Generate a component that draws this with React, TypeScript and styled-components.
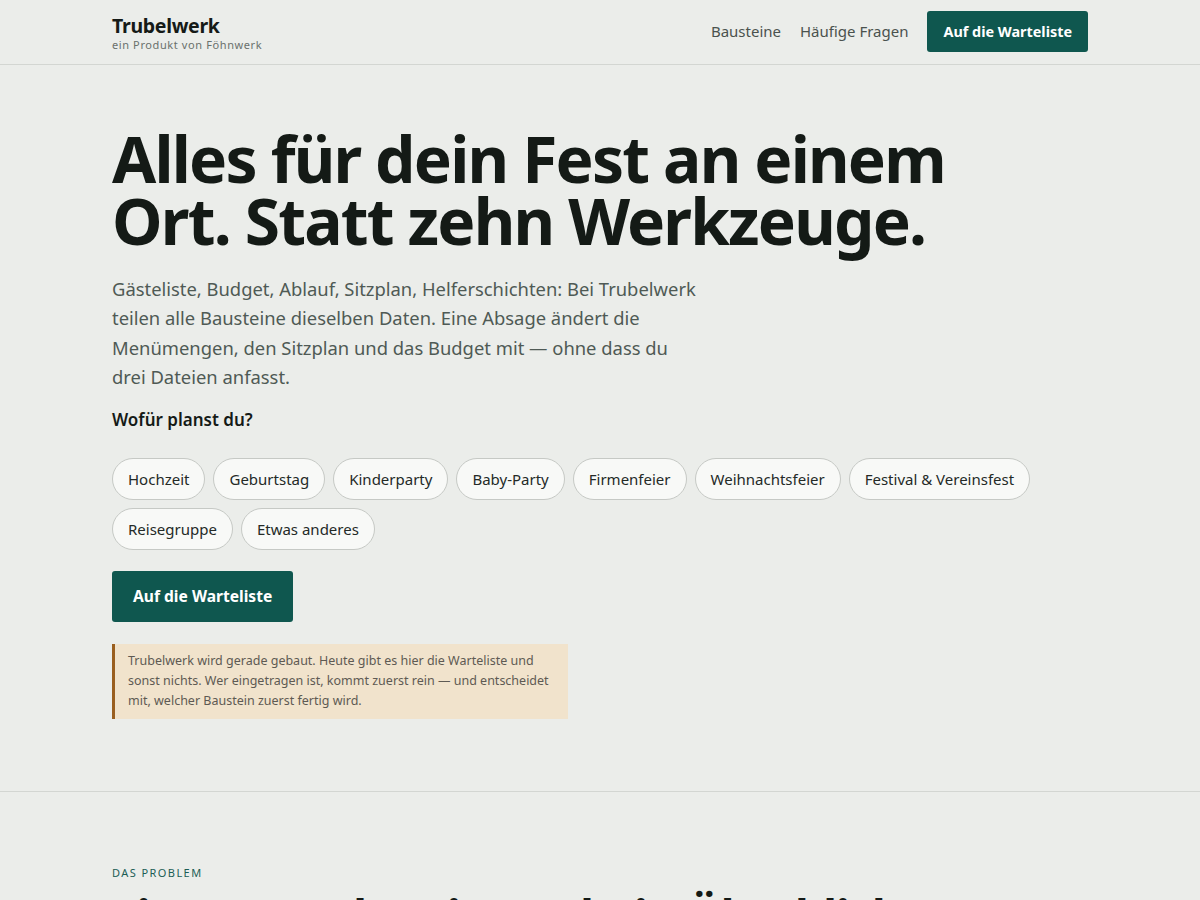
import styled, { createGlobalStyle } from "styled-components";

const GlobalStyle = createGlobalStyle`
  html, body {
    margin: 0;
    padding: 0;
    background: #ebedea;
  }
  body {
    font-family: "Noto Sans", "Open Sans", sans-serif;
    color: #151a17;
  }
  * {
    box-sizing: border-box;
  }
`;

const Header = styled.header`
  border-bottom: 1px solid #d3d6d2;
  background: #ebedea;
`;

const Container = styled.div`
  width: 976px;
  margin: 0 auto;
`;

const HeaderInner = styled(Container)`
  height: 64px;
  padding-bottom: 2px;
  display: flex;
  align-items: center;
  justify-content: space-between;
`;

const Brand = styled.div`
  display: flex;
  flex-direction: column;
  padding-top: 3px;
`;

const BrandName = styled.span`
  font-size: 19.5px;
  font-weight: 700;
  line-height: 24px;
  letter-spacing: -0.015em;
  color: #151a17;
`;

const BrandSub = styled.span`
  font-size: 11px;
  line-height: 14px;
  letter-spacing: 0.055em;
  color: #6a716d;
`;

const Nav = styled.nav`
  display: flex;
  align-items: center;
  gap: 19px;
`;

const NavLink = styled.a`
  font-size: 15px;
  color: #4a524e;
  text-decoration: none;
`;

const Button = styled.a<{ $large?: boolean }>`
  display: inline-flex;
  align-items: center;
  justify-content: center;
  background: #0f574f;
  color: #ffffff;
  font-weight: 700;
  text-decoration: none;
  border-radius: 3px;
  height: ${(p) => (p.$large ? "51px" : "41px")};
  padding: ${(p) => (p.$large ? "0 21px" : "0 16px")};
  font-size: ${(p) => (p.$large ? "15.6px" : "14.4px")};
`;

const Hero = styled.section`
  border-bottom: 1px solid #d3d6d2;
  padding: 63px 0 72px;
`;

const Title = styled.h1`
  margin: 0;
  font-size: 64px;
  line-height: 62px;
  font-weight: 700;
  letter-spacing: -0.028em;
  color: #141a16;
  max-width: 860px;
`;

const Lead = styled.p`
  margin: 22px 0 0;
  max-width: 590px;
  font-size: 18.4px;
  line-height: 29.4px;
  color: #4f5a55;
`;

const Question = styled.h2`
  margin: 16px 0 0;
  font-size: 17px;
  line-height: 24px;
  font-weight: 600;
  color: #151a17;
`;

const Chips = styled.div`
  display: flex;
  flex-wrap: wrap;
  gap: 8px;
  margin-top: 26px;
  max-width: 940px;
`;

const Chip = styled.button`
  height: 42px;
  padding: 0 15px;
  border-radius: 21px;
  border: 1px solid #c6c9c5;
  background: #f8f9f7;
  font-family: inherit;
  font-size: 15px;
  color: #242a27;
`;

const CtaRow = styled.div`
  margin-top: 21px;
`;

const Note = styled.p`
  margin: 22px 0 0;
  width: 456px;
  padding: 7.5px 16px 7.5px 13px;
  background: #f1e3cc;
  border-left: 3px solid #9a5f1f;
  font-size: 12.5px;
  line-height: 20px;
  color: #5e5a53;
`;

const Section = styled.section`
  padding: 73px 0 60px;
`;

const Eyebrow = styled.div`
  font-size: 11px;
  letter-spacing: 0.13em;
  text-transform: uppercase;
  color: #1b5d55;
`;

const SectionTitle = styled.h2`
  margin: 10px 0 0;
  font-size: 46px;
  line-height: 52px;
  font-weight: 700;
  letter-spacing: -0.02em;
  color: #141a16;
`;

const occasions = [
  "Hochzeit",
  "Geburtstag",
  "Kinderparty",
  "Baby-Party",
  "Firmenfeier",
  "Weihnachtsfeier",
  "Festival & Vereinsfest",
  "Reisegruppe",
  "Etwas anderes",
];

export default function App() {
  return (
    <>
      <GlobalStyle />
      <Header>
        <HeaderInner>
          <Brand>
            <BrandName>Trubelwerk</BrandName>
            <BrandSub>ein Produkt von Föhnwerk</BrandSub>
          </Brand>
          <Nav>
            <NavLink href="#bausteine">Bausteine</NavLink>
            <NavLink href="#faq">Häufige Fragen</NavLink>
            <Button href="#warteliste">Auf die Warteliste</Button>
          </Nav>
        </HeaderInner>
      </Header>
      <Hero>
        <Container>
          <Title>Alles für dein Fest an einem Ort. Statt zehn Werkzeuge.</Title>
          <Lead>
            Gästeliste, Budget, Ablauf, Sitzplan, Helferschichten: Bei Trubelwerk
            teilen alle Bausteine dieselben Daten. Eine Absage ändert die
            Menümengen, den Sitzplan und das Budget mit — ohne dass du drei
            Dateien anfasst.
          </Lead>
          <Question>Wofür planst du?</Question>
          <Chips>
            {occasions.map((o) => (
              <Chip key={o}>{o}</Chip>
            ))}
          </Chips>
          <CtaRow>
            <Button $large href="#warteliste">
              Auf die Warteliste
            </Button>
          </CtaRow>
          <Note>
            Trubelwerk wird gerade gebaut. Heute gibt es hier die Warteliste und
            sonst nichts. Wer eingetragen ist, kommt zuerst rein — und
            entscheidet mit, welcher Baustein zuerst fertig wird.
          </Note>
        </Container>
      </Hero>
      <Section>
        <Container>
          <Eyebrow>Das Problem</Eyebrow>
          <SectionTitle>Ein Fest, zehn Listen, kein Überblick.</SectionTitle>
        </Container>
      </Section>
    </>
  );
}
